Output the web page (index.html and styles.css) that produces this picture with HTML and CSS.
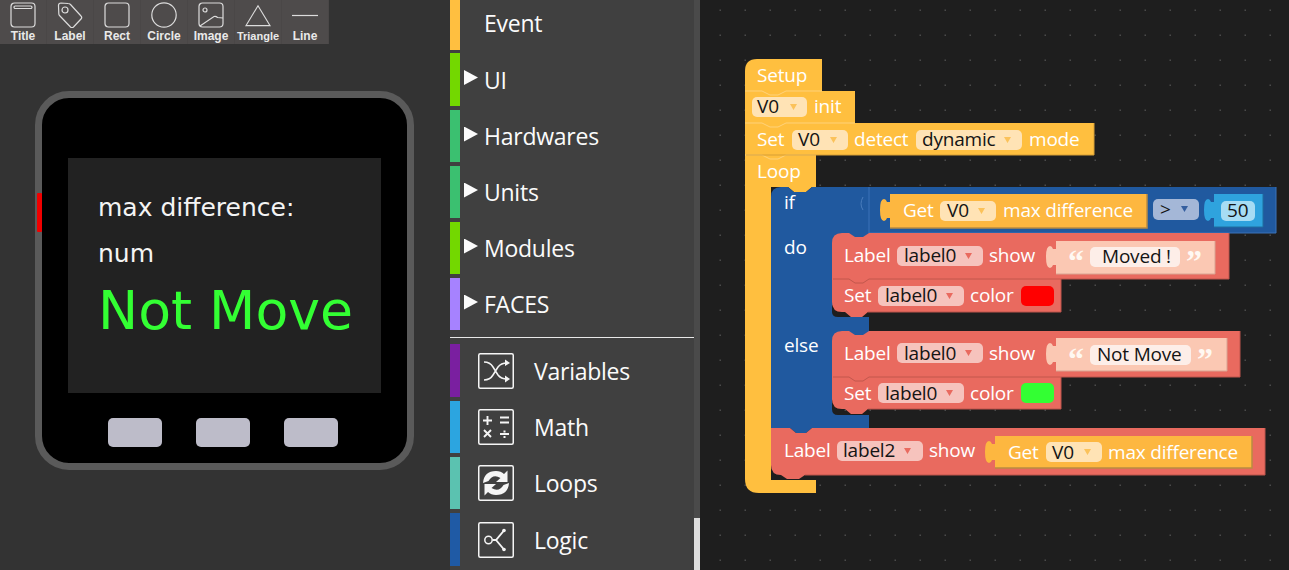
FILE: index.html
```html
<!DOCTYPE html>
<html lang="en">
<head>
<meta charset="utf-8">
<title>UIFlow</title>
<link rel="stylesheet" href="styles.css">
</head>
<body>
<div class="app">
  <section class="stage">
    <div class="toolbar">
      <div class="tool"><svg class="tool-icon" viewBox="0 0 26 26"><rect x="1" y="1" width="24" height="24" rx="3.5"/><rect x="4" y="4" width="18" height="2.5" rx="1.2"/></svg><span>Title</span></div>
      <div class="tool"><svg class="tool-icon" viewBox="0 0 26 26"><path d="M1.5 3.5Q1.5 1 4 1L11 1.500Q12.500 1.500 13.500 2.500L24 14Q25.500 15.500 24 17L16.500 25Q15 26.500 13.500 25L2.500 13.500Q1.800 12.800 1.800 11.500Z"/><circle cx="8" cy="8" r="3"/></svg><span>Label</span></div>
      <div class="tool"><svg class="tool-icon" viewBox="0 0 26 26"><rect x="1" y="1" width="24" height="24" rx="3.500"/></svg><span>Rect</span></div>
      <div class="tool"><svg class="tool-icon" viewBox="0 0 26 26"><circle cx="13" cy="13" r="12.200"/></svg><span>Circle</span></div>
      <div class="tool"><svg class="tool-icon" viewBox="0 0 26 26"><rect x="1" y="1" width="24" height="24" rx="3.500"/><circle cx="7" cy="8" r="2"/><path d="M2 24L16 14.500Q18 14 19.500 15.500L25 16"/></svg><span>Image</span></div>
      <div class="tool"><svg class="tool-icon" viewBox="0 0 28 26"><path d="M14 3L27 24.500H1Z"/></svg><span class="narrow">Triangle</span></div>
      <div class="tool"><svg class="tool-icon" viewBox="0 0 26 26"><path d="M0 13.500H26"/></svg><span>Line</span></div>
    </div>
    <div class="device">
      <div class="led"></div>
      <div class="screen">
        <div class="line-a">max difference:</div>
        <div class="line-b">num</div>
        <div class="line-c">Not Move</div>
      </div>
      <div class="buttons"><div class="hw-btn"></div><div class="hw-btn"></div><div class="hw-btn"></div></div>
    </div>
  </section>

  <nav class="palette">
    <div class="cats">
      <div class="cat cat-first"><i class="bar c-event"></i><b class="caret-space"></b><span>Event</span></div>
      <div class="cat cat-tall"><i class="bar c-ui"></i><b class="caret"></b><span>UI</span></div>
      <div class="cat"><i class="bar c-hw"></i><b class="caret"></b><span>Hardwares</span></div>
      <div class="cat"><i class="bar c-hw"></i><b class="caret"></b><span>Units</span></div>
      <div class="cat"><i class="bar c-ui"></i><b class="caret"></b><span>Modules</span></div>
      <div class="cat"><i class="bar c-faces"></i><b class="caret"></b><span>FACES</span></div>
      <hr class="divider">
      <div class="cat cat-tall"><i class="bar c-var"></i>
        <svg class="cat-icon" viewBox="0 0 36 36"><rect x="0.750" y="0.750" width="34.500" height="34.500" rx="1.500"/><path d="M6 9Q12 9 15 14L20 22Q23 26 29 26M6 27Q12 27 15 22L20 14Q23 10 29 10"/><path class="solid" d="M27 6.500L32 10L27 13ZM27 22.500L32 26L27 29.500Z"/></svg>
        <span>Variables</span></div>
      <div class="cat"><i class="bar c-math"></i>
        <svg class="cat-icon" viewBox="0 0 36 36"><rect x="0.750" y="0.750" width="34.500" height="34.500" rx="1.500"/><path class="thick" d="M5 11.500H14M9.500 7V16M22 8.500H31M22 13.500H31M6 21L13 28M13 21L6 28M22 25H31"/><path class="solid" d="M25.500 21.500h2v2h-2zM25.500 27h2v2h-2z"/></svg>
        <span>Math</span></div>
      <div class="cat"><i class="bar c-loop"></i>
        <svg class="cat-icon" viewBox="0 0 36 36"><rect x="0.750" y="0.750" width="34.500" height="34.500" rx="1.500"/><path class="solid" d="M5 18Q6 6 18 6Q23 6 26 9L29.500 5.500V17H18L22.500 13Q15 8.500 10.500 16ZM31 18Q30 30 18 30Q13 30 10 27L6.500 30.500V19H18L13.500 23Q21 27.500 25.500 20Z"/></svg>
        <span>Loops</span></div>
      <div class="cat cat-tall"><i class="bar c-logic"></i>
        <svg class="cat-icon" viewBox="0 0 36 36"><rect x="0.750" y="0.750" width="34.500" height="34.500" rx="1.500"/><circle cx="10.500" cy="18" r="3.700"/><path class="thick" d="M14.500 18H18L26 8.500M18 18L26 27.500"/><circle class="solid" cx="26" cy="8.500" r="1.800"/><circle class="solid" cx="26" cy="27.500" r="1.800"/></svg>
        <span>Logic</span></div>
    </div>
    <div class="scrollbar"><div class="thumb"></div></div>
  </nav>

  <svg class="workspace" viewBox="700 0 589 570" xmlns="http://www.w3.org/2000/svg">
    <defs>
      <pattern id="dots" patternUnits="userSpaceOnUse" x="744" y="59" width="25" height="25"><rect class="dot" x="0.500" y="0.500" width="1.500" height="1.500"/></pattern>
    </defs>
    <rect class="grid" x="700" y="0" width="589" height="570"/>

    <!-- Setup stack -->
    <path class="yellow" d="M745 71Q745 59 757 59H822V91H745Z"/>
    <path class="yellow" d="M745 91H855V123H745Z"/>
    <path class="yellow" d="M745 123H1094V155H745Z"/>
    <path class="yellow" d="M745 155H816V187H812L806 192H794L788 187H771V480H816V493H759Q745 493 745 479Z"/>
    <path class="seam-y" d="M745 91H762L770 95H778L786 91H822M745 123H762L770 127H778L786 123H855M745 155H762L770 159H778L786 155H816"/>
    <path class="edge-y" d="M746 155H1094V123"/>

    <!-- if / else -->
    <path class="blue" d="M781 187H788L794 192H806L812 187H1276V233H869V240H840V305H832V312Q832 317 838 317H869V340H840V400H832V409Q832 415 838 415H869V428H771V197Q771 187 781 187Z"/>
    <path class="edge-b" d="M869 187V233M1276 187V233H869"/>
    <path class="socket" d="M863 197Q859 204 863 210"/>

    <!-- do -->
    <path class="red" d="M842 233H849L855 237H863L869 233H1229V279H1061V312H868L862 317H851L845 312H842Q832 312 832 302V243Q832 233 842 233Z"/>
    <path class="seam-r" d="M833 279H849L855 283H863L869 279H1061"/>
    <path class="edge-r" d="M1229 233V279H1061V312H868"/>

    <!-- else -->
    <path class="red" d="M842 331H849L855 335H863L869 331H1240V377H1061V409H868L862 414H851L845 409H842Q832 409 832 399V341Q832 331 842 331Z"/>
    <path class="seam-r" d="M833 377H849L855 381H863L869 377H1061"/>
    <path class="edge-r" d="M1240 331V377H1061V409H868"/>

    <!-- Label label2 -->
    <path class="blue" d="M790 428H812L806 433H796Z"/>
    <path class="red" d="M771 428H790L796 433H806L812 428H1265V475H805L799 479H787L781 475Q771 475 771 465Z"/>
    <path class="edge-r" d="M1265 428V475H805"/>

    <!-- Value blocks -->
    <path class="value-y" d="M890 194H1147V228H890V218h-3q-1 3 -3 3q-4 0 -4 -11q0 -11 4 -11q2 0 3 3h3Z"/>
    <path class="edge-v" d="M890 228H1147V194"/>
    <path class="value-b" d="M1214 194H1263V227H1214V218h-3q-1 3 -3 3q-4 0 -4 -11q0 -11 4 -11q2 0 3 3h3Z"/>
    <path class="edge-b2" d="M1214 227H1263V194"/>
    <path class="value-s" d="M1056 241H1215V274H1056V265h-3q-1 3 -3 3q-4 0 -4 -11q0 -11 4 -11q2 0 3 3h3Z"/>
    <path class="value-s" d="M1056 338H1227V371H1056V362h-3q-1 3 -3 3q-4 0 -4 -11q0 -11 4 -11q2 0 3 3h3Z"/>
    <path class="edge-s" d="M1056 274H1215V241M1056 371H1227V338"/>
    <path class="value-y" d="M995 436H1252V468H995V460h-3q-1 3 -3 3q-4 0 -4 -11q0 -11 4 -11q2 0 3 3h3Z"/>
    <path class="edge-v" d="M995 468H1252V436"/>

    <!-- Fields -->
    <rect class="fld-y" x="752" y="97" width="55" height="20" rx="5"/>
    <rect class="fld-y" x="792" y="130" width="56" height="20" rx="5"/>
    <rect class="fld-y" x="916" y="130" width="106" height="20" rx="5"/>
    <rect class="fld-y" x="940" y="201" width="56" height="20" rx="5"/>
    <rect class="fld-y" x="1046" y="442" width="56" height="20" rx="5"/>
    <rect class="fld-r" x="897" y="246" width="86" height="20" rx="5"/>
    <rect class="fld-r" x="878" y="286" width="86" height="20" rx="5"/>
    <rect class="fld-r" x="897" y="343" width="86" height="20" rx="5"/>
    <rect class="fld-r" x="878" y="383" width="86" height="20" rx="5"/>
    <rect class="fld-r" x="837" y="441" width="86" height="20" rx="5"/>
    <rect class="fld-g" x="1153" y="199" width="46" height="21" rx="5"/>
    <rect class="fld-n" x="1221" y="201" width="34" height="20" rx="5"/>
    <rect class="fld-w" x="1090" y="247" width="90" height="20" rx="5"/>
    <rect class="fld-w" x="1090" y="345" width="101" height="20" rx="5"/>
    <rect class="swatch-red" x="1021" y="286" width="33" height="20" rx="5"/>
    <rect class="swatch-green" x="1021" y="383" width="33" height="20" rx="5"/>

    <!-- Dropdown arrows -->
    <path class="arr-y" d="M790 104h7l-3.500 6zM830 137h7l-3.500 6zM1004 137h7l-3.500 6zM978 208h7l-3.500 6zM1084 449h7l-3.500 6z"/>
    <path class="arr-r" d="M965 253h7l-3.500 6zM946 293h7l-3.500 6zM965 350h7l-3.500 6zM946 390h7l-3.500 6zM904 448h7l-3.500 6z"/>
    <path class="arr-b" d="M1181 206h7l-3.500 6z"/>

    <!-- Labels -->
    <text class="t" x="757" y="82">Setup</text>
    <text class="k" x="757" y="113">V0</text><text class="t" x="814" y="113">init</text>
    <text class="t" x="757" y="146">Set</text><text class="k" x="798" y="146">V0</text><text class="t" x="854" y="146">detect</text><text class="k" x="922" y="146">dynamic</text><text class="t" x="1029" y="146">mode</text>
    <text class="t" x="757" y="178">Loop</text>
    <text class="t" x="784" y="209">if</text>
    <text class="t" x="903" y="217">Get</text><text class="k" x="947" y="217">V0</text><text class="t" x="1003" y="217">max difference</text>
    <text class="k" x="1160" y="216">&gt;</text>
    <text class="k" x="1227" y="217">50</text>
    <text class="t" x="784" y="254">do</text>
    <text class="t" x="844" y="262">Label</text><text class="k" x="904" y="262">label0</text><text class="t" x="989" y="262">show</text>
    <text class="q" x="1068" y="272">“</text><text class="k" x="1102" y="263">Moved !</text><text class="q" x="1186" y="272">”</text>
    <text class="t" x="844" y="302">Set</text><text class="k" x="885" y="302">label0</text><text class="t" x="970" y="302">color</text>
    <text class="t" x="784" y="352">else</text>
    <text class="t" x="844" y="360">Label</text><text class="k" x="904" y="360">label0</text><text class="t" x="989" y="360">show</text>
    <text class="q" x="1068" y="370">“</text><text class="k" x="1097" y="361">Not Move</text><text class="q" x="1197" y="370">”</text>
    <text class="t" x="844" y="400">Set</text><text class="k" x="885" y="400">label0</text><text class="t" x="970" y="400">color</text>
    <text class="t" x="784" y="457">Label</text><text class="k" x="843" y="457">label2</text><text class="t" x="929" y="457">show</text>
    <text class="t" x="1008" y="459">Get</text><text class="k" x="1052" y="459">V0</text><text class="t" x="1108" y="459">max difference</text>
  </svg>
</div>
</body>
</html>
```

FILE: styles.css
```css
* { box-sizing: border-box; }
html, body { margin: 0; padding: 0; height: 100%; overflow: hidden; background: #333; }
.app { display: flex; width: 1289px; height: 570px; }

/* Left stage */
.stage { width: 450px; height: 570px; background: #333333; flex: none; }
.toolbar { display: flex; width: 329px; height: 44px; background: #4e4b4b; }
.tool { width: 47px; display: flex; flex-direction: column; align-items: center; padding-top: 2px; border-right: 1px solid #4a4747;
  font: bold 12px/13px "Liberation Sans", Arial, sans-serif; color: #e9e9e9; }
.tool span { margin-top: 2px; }
.tool .narrow { font-size: 11px; }
.tool-icon { width: 26px; height: 26px; fill: none; stroke: #dcdcdc; stroke-width: 1.200; }

.device { position: relative; width: 379px; height: 379px; margin: 47px 0 0 35px; background: #000; border: 7px solid #5a5a5a; border-radius: 34px; }
.led { position: absolute; left: -5px; top: 95px; width: 5px; height: 39px; background: #f00000; border-radius: 1px; }
.screen { width: 313px; height: 235px; margin: 60px 0 0 26px; padding: 33px 0 0 30px; background: #222222; font-family: "DejaVu Sans", sans-serif; color: #f4f4f4; }
.line-a { font-size: 25px; line-height: 34px; }
.line-b { font-size: 25px; line-height: 34px; margin-top: 12px; }
.line-c { font-size: 53.700px; line-height: 60px; margin-top: 10px; margin-left: 0; color: #33ff33; white-space: nowrap; }
.buttons { display: flex; gap: 34px; justify-content: center; margin-top: 25px; margin-left: -4px; }
.hw-btn { width: 54px; height: 29px; background: #bdbcc9; border-radius: 5px; }

/* Palette */
.palette { position: relative; display: flex; width: 250px; height: 570px; flex: none; background: #404040; }
.cats { width: 244px; font-family: "Open Sans", "Noto Sans", sans-serif; font-size: 23px; color: #fbfbfb; letter-spacing: -0.250px; }
.cat { display: flex; align-items: center; height: 52px; margin-bottom: 4px; }
.cat-first { height: 50px; margin-bottom: 3px; }
.cat-first span { top: -2px; }
.cat-tall { height: 53px; }
.cat span { position: relative; }
.bar { display: block; width: 10px; height: 100%; flex: none; }
.c-event { background: #ffbf40; }
.c-ui { background: #73d800; }
.c-hw { background: #3bc070; }
.c-faces { background: #a682ff; }
.c-var { background: #7a1fa0; }
.c-math { background: #2ca5e0; }
.c-loop { background: #5bc2b0; }
.c-logic { background: #1f5aa5; }
.caret-space, .caret { display: block; width: 14px; height: 15px; margin: 0 6px 0 4px; flex: none; }
.caret { margin-top: -4px; background: #fbfbfb; clip-path: polygon(0 0, 100% 50%, 0 100%); }
.divider { height: 1px; margin: 7px 0 6px; border: 0; background: #e8e8e8; }
.cat-icon { width: 36px; height: 36px; margin: 0 20px 0 18px; flex: none; fill: none; stroke: #f5f5f5; stroke-width: 1.500; }
.cat-icon .solid { fill: #f5f5f5; stroke: none; }
.cat-icon .thick { stroke-width: 1.900; }
.scrollbar { position: relative; width: 6px; height: 570px; background: #4a4a4a; }
.thumb { position: absolute; left: 0; bottom: 0; width: 6px; height: 52px; background: #dedede; }

/* Workspace */
.workspace { display: block; width: 589px; height: 570px; flex: none; background: #1e1e1e; }
.grid { fill: url(#dots); }
.dot { fill: #4a4a4a; }
.yellow { fill: #ffbf3f; }
.blue { fill: #20599f; }
.red { fill: #e96a5f; }
.value-y { fill: #fdb740; }
.value-b { fill: #2fa3de; }
.value-s { fill: #fbc8b3; }
.seam-y, .seam-r, .edge-y, .edge-b, .edge-r, .edge-v, .edge-b2, .edge-s, .socket { fill: none; stroke-width: 1; }
.seam-y { stroke: #ffd27a; }
.seam-r { stroke: #c2574d; }
.edge-y { stroke: #d79f36; }
.edge-b { stroke: #3a72b8; }
.edge-r { stroke: #bd554c; }
.edge-v { stroke: #b98c42; stroke-width: 1.500; }
.edge-b2 { stroke: #1f6ea0; }
.edge-s { stroke: #d9a492; }
.socket { stroke: #4a7dbd; }
.fld-y { fill: #ffe3b5; }
.fld-r { fill: #f6c3bd; }
.fld-g { fill: #a4b7d7; }
.fld-n { fill: #a6dcf4; }
.fld-w { fill: #fdeee8; }
.swatch-red { fill: #ff0000; }
.swatch-green { fill: #33ff33; }
.arr-y { fill: #fbc25a; }
.arr-r { fill: #e96a5f; }
.arr-b { fill: #355f9f; }
.t, .k { font-family: "Open Sans", "Noto Sans", sans-serif; font-size: 19px; letter-spacing: -0.200px; }
.t { fill: #ffffff; }
.k { fill: #141414; }
.q { font-family: "Liberation Serif", serif; font-weight: bold; font-size: 32px; fill: #fff8f2; }
```
